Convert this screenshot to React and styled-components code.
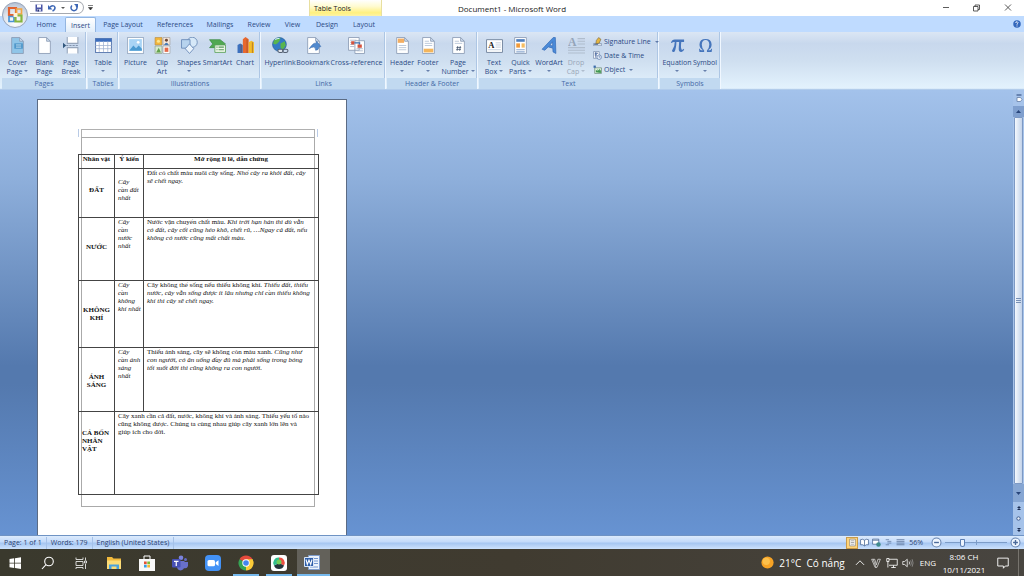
import React from 'react'
import styled, { createGlobalStyle } from 'styled-components'

const GlobalStyle = createGlobalStyle`
  * {
    box-sizing: border-box;
  }

  body {
    margin: 0;
    overflow: hidden;
    font-family: 'Open Sans', 'Noto Sans', sans-serif;
    font-size: 7px;
  }

  button {
    margin: 0;
    padding: 0;
    border: 0;
    background: none;
    color: inherit;
    font: inherit;
  }

  svg {
    display: block;
    flex: none;
  }
`

const Screen = styled.div`
  display: flex;
  flex-direction: column;
  height: 100vh;
`

/* Title bar */

const TitleBar = styled.header`
  position: relative;
  display: flex;
  align-items: center;
  justify-content: center;
  height: 16px;
  background: #fff;
`

const Title = styled.h1`
  margin: 0;
  font-size: 8px;
  font-weight: 400;
  color: #222;
`

const OfficeButton = styled.button`
  position: absolute;
  left: 2px;
  top: 2px;
  z-index: 2;
`

const QuickAccess = styled.div`
  position: absolute;
  left: 30px;
  top: 1px;
  display: flex;
  align-items: center;
  gap: 5px;
  height: 13px;
  width: 54px;
  padding-left: 5px;
  border: 1px solid #a5a9b0;
  border-left: 0;
  border-radius: 0 7px 7px 0;
`

const QuickMore = styled.button`
  position: absolute;
  left: 88px;
  top: 5px;
`

const ContextTab = styled.div`
  position: absolute;
  left: 309px;
  top: 0;
  width: 73px;
  height: 16px;
  padding: 4px 0 0 4px;
  border: solid #e8dfa0;
  border-width: 0 1px;
  background: linear-gradient(#fff 0, #fffbd0 40%, #fff07e 80%, #fdf3a8);
  color: #222;
  line-height: 9px;
`

const WindowButtons = styled.div`
  position: absolute;
  right: 12px;
  top: 4px;
  display: flex;
  gap: 23px;
`

/* Ribbon */

const Tabs = styled.nav`
  display: flex;
  align-items: flex-end;
  height: 16px;
  padding-left: 28px;
  background: #bfdbff;
`

const Tab = styled.button`
  width: ${(props) => props.$width}px;
  height: 15px;
  border-radius: 2px 2px 0 0;
  color: #2b4a85;
  white-space: nowrap;
  ${(props) =>
    props.$active &&
    `
    border: 1px solid #93b5e0;
    border-bottom: 0;
    background: linear-gradient(#fff, #e2eefa);
  `}
`

const Help = styled.button`
  margin: 0 3px 4px auto;
`

const Ribbon = styled.section`
  display: flex;
  height: 58px;
  padding: 0 2px;
  background: linear-gradient(#dbe6f4 0, #c8d8ed 20%, #cfdff0 50%, #e3f2fd 97%, #9ebde4 100%);
`

const Group = styled.div`
  display: flex;
  flex-direction: column;
  height: 57px;
  margin-right: 1px;
  border-right: 1px solid #f0f7ff;
  box-shadow: inset -1px 0 #adc6e4;
`

const GroupBody = styled.div`
  display: flex;
  flex: 1;
  padding: 5px 2px 0;
`

const GroupName = styled.div`
  height: 11px;
  background: #c1d9f0;
  color: #4469a6;
  line-height: 12px;
  text-align: center;
`

const BigButton = styled.button`
  display: flex;
  flex-direction: column;
  align-items: center;
  width: ${(props) => props.$width}px;
  color: ${(props) => (props.disabled ? '#9aa7b8' : '#2b4a85')};
  line-height: 9px;
  white-space: nowrap;

  svg {
    margin-bottom: 4px;
  }
`

const Arrow = styled.span`
  display: inline-block;
  width: 0;
  height: 0;
  margin: 3px 0 2px ${(props) => (props.$inline ? 2 : 0)}px;
  border: solid transparent;
  border-width: 2px 2px 0;
  border-top-color: currentColor;
  opacity: 0.65;
`

const SmallButtons = styled.div`
  display: flex;
  flex-direction: column;
  gap: 6px;
  margin-left: 5px;
  width: 63px;
`

const SmallButton = styled.button`
  display: flex;
  align-items: center;
  gap: 2px;
  height: 8px;
  color: #2b4a85;
  white-space: nowrap;
`

/* Document */

const Workspace = styled.main`
  display: flex;
  flex: 1;
  min-height: 0;
  background: linear-gradient(#a3c2eb 0, #8eafdb 20%, #5479ae 62%, #5479ae 66%, #6793d2 100%);
`

const Canvas = styled.div`
  flex: 1;
  padding: 9px 0 0 37px;
  overflow: hidden;
`

const Page = styled.article`
  width: 310px;
  height: 460px;
  padding: 29px 28px 0 40px;
  border: 1px solid #5b6b84;
  border-width: 1px 1px 0;
  background: #fff;
`

const HeaderArea = styled.div`
  height: 8px;
  padding: 0 2px;
  border: solid #b9cbe6;
  border-width: 0 1px;

  &::before {
    content: '';
    display: block;
    height: 8px;
    border: 1px solid #b0b0b0;
    border-bottom: 0;
  }
`

const TextArea = styled.div`
  position: relative;
  height: 370px;
  padding-top: 17px;

  &::before {
    content: '';
    position: absolute;
    inset: 0 3px;
    border: 1px solid #aaa;
  }
`

const Table = styled.table`
  position: relative;
  width: 241px;
  border-collapse: collapse;
  table-layout: fixed;
  color: #111;
  font-family: 'Liberation Serif', serif;
  font-size: 7px;
  line-height: 8px;
  white-space: nowrap;
`

const Row = styled.tr`
  height: ${(props) => props.$height}px;
`

const Cell = styled.td`
  padding: 0 0 0 3px;
  border: 1px solid #444;
  vertical-align: top;
`

const HeadCell = styled.th`
  padding: 0;
  border: 1px solid #444;
  vertical-align: top;
`

const NameCell = styled.th`
  padding: ${(props) => props.$top}px 0 0 ${(props) => (props.$left ? 3 : 0)}px;
  border: 1px solid #444;
  text-align: ${(props) => (props.$left ? 'left' : 'center')};
  vertical-align: top;
`

const OpinionCell = styled(Cell)`
  padding-top: ${(props) => props.$top}px;
  font-style: italic;
`

const ScrollBar = styled.div`
  display: flex;
  flex-direction: column;
  align-items: center;
  width: 11px;
  background: #a6c3ea;
`

const ScrollStep = styled.button`
  display: grid;
  place-items: center;
  width: 100%;
  height: ${(props) => props.$height}px;
  background: ${(props) => props.$fill};
  color: #28457a;
`

const Thumb = styled.div`
  display: grid;
  place-items: center;
  flex: 1;
  width: 9px;
  border: 1px solid #7d99c4;
  border-radius: 1px;
  background: linear-gradient(90deg, #f4f8fd, #c3d3ea);
`

/* Status bar */

const StatusBar = styled.footer`
  display: flex;
  align-items: center;
  height: 14px;
  padding-right: 3px;
  border-top: 1px solid #6f93c4;
  background: linear-gradient(#dcebfd 0, #c3dafa 45%, #a6c6f1 55%, #cde2fd 100%);
  color: #2b4372;
`

const StatusItem = styled.span`
  padding: 0 4px;
  border-right: 1px solid #a5c1e8;
  line-height: 12px;
`

const Views = styled.div`
  display: flex;
  align-items: center;
  margin-left: auto;
`

const ViewButton = styled.button`
  display: grid;
  place-items: center;
  width: 12px;
  height: 12px;
  ${(props) => props.$active && 'background: #ffd47a; box-shadow: inset 0 0 0 1px #c99b4a;'}
`

const Zoom = styled.div`
  display: flex;
  align-items: center;
  gap: 3px;
  margin-left: 3px;
`

const ZoomLevel = styled.button`
  margin-right: 5px;
`

const ZoomSlider = styled.input`
  appearance: none;
  width: 62px;
  height: 10px;
  margin: 0;
  background: linear-gradient(#7c9cc8, #7c9cc8) center / 100% 1px no-repeat,
    linear-gradient(#7c9cc8, #7c9cc8) center / 1px 5px no-repeat;

  &::-webkit-slider-thumb {
    appearance: none;
    width: 5px;
    height: 8px;
    border: 1px solid #5c7eb2;
    border-radius: 1px 1px 3px 3px;
    background: #edf4fd;
  }
`

/* Taskbar */

const Taskbar = styled.footer`
  display: flex;
  align-items: center;
  justify-content: space-between;
  height: 27px;
  background: linear-gradient(90deg, #3a392d, #403b30 50%, #484540);
  color: #fff;
`

const Apps = styled.div`
  display: flex;
  height: 100%;
`

const AppButton = styled.button`
  display: grid;
  place-items: center;
  width: 33px;
  height: 27px;
  padding-right: 3px;
  background-color: ${(props) => (props.$focused ? '#63615a' : 'transparent')};
  ${(props) =>
    props.$open &&
    `
    background-image: linear-gradient(#76b9ed, #76b9ed);
    background-position: 2px bottom;
    background-repeat: no-repeat;
    background-size: 26px 2px;
  `}
  ${(props) => props.$focused && 'background-position: 0 bottom; background-size: 100% 2px;'}
`

const Tray = styled.div`
  display: flex;
  align-items: center;
  height: 100%;
  padding-right: 5px;
  font-size: 8px;
`

const Weather = styled.button`
  display: flex;
  align-items: center;
  gap: 5px;
  margin-right: 7px;
  font-size: 10px;
`

const TrayButton = styled.button`
  display: grid;
  place-items: center;
  width: 16px;
  height: 27px;
`

const Language = styled.button`
  margin-left: 4px;
`

const Clock = styled.time`
  width: 46px;
  margin-left: 5px;
  line-height: 13px;
  text-align: center;
`

const Notifications = styled.button`
  display: grid;
  place-items: center;
  width: 32px;
  height: 27px;
  border-right: 1px solid #77746e;
`

/* Drawings */

const Icon = ({ size = 17, box = 16, children }) => (
  <svg width={size} height={size} viewBox={`0 0 ${box} ${box}`} fill="none" aria-hidden="true">
    {children}
  </svg>
)

const Sheet = ({ fill = '#fff' }) => (
  <path d="M2.500.5h7.500l3.500 3.500v11.500h-11z M10 .5V4h3.500" fill={fill} stroke="#8b9cb5" strokeWidth=".8" />
)

const icons = {
  cover: (
    <>
      <Sheet fill="#90c5e8" />
      <path d="M5 6h8v5H5z" fill="#4b94c8" />
      <path d="M6.500 7.500h5M6.500 9.500h5" stroke="#d4ebf8" strokeWidth=".8" />
    </>
  ),
  blank: <Sheet />,
  pageBreak: (
    <>
      <path d="M4 0v6h10V0M4 15.500V10h10v5.500" fill="#fff" stroke="#96a5ba" />
      <path d="M3 8h12" stroke="#8494ad" strokeDasharray="2 1" />
      <path d="M0 5.500 3 8l-3 2.500z" fill="#31577d" />
    </>
  ),
  table: (
    <>
      <path d="M.5 1.500h15v13H.5z" fill="#fff" stroke="#6381b4" />
      <path d="M.5 1.500h15v3H.5z" fill="#3b6dbd" />
      <path d="M.5 8h15M.5 11h15M4 4v10M8 4v10M12 4v10" stroke="#9eb1d0" strokeWidth=".7" />
    </>
  ),
  picture: (
    <>
      <path d="M.5.5h15v15H.5z" fill="#fff" stroke="#a3b4ca" />
      <path d="M2 2h12v11H2z" fill="#a9d4f5" />
      <path d="m2 13 4-5 2.500 2.500L11 8l3 3v2z" fill="#4c9bd1" />
      <circle cx="10.500" cy="5" r="1.300" fill="#fff" />
    </>
  ),
  clipArt: (
    <>
      <path d="M1 .5h6.500v7H1z" fill="#f2b63c" stroke="#b78a45" strokeWidth=".6" />
      <path d="M8.500.5H15v7H8.500z" fill="#f5e6da" stroke="#a09a95" strokeWidth=".6" />
      <path d="M1 8.500h6.500v7H1z" fill="#d7ead0" stroke="#8a9a89" strokeWidth=".6" />
      <path d="M8.500 8.500H15v7H8.500z" fill="#fff" stroke="#9a9a9a" strokeWidth=".6" />
      <circle cx="4.200" cy="4" r="1.500" fill="#fce48e" />
      <circle cx="11.700" cy="3" r="1.400" fill="#6a4737" />
      <path d="M9.500 7.500q2.200-4 4.400 0z" fill="#467bb5" />
      <path d="M2 14.500 4.500 10 6.500 14.500z" fill="#63a24d" />
      <path d="M10 10h3.500v4H10z" fill="#e36a4a" />
    </>
  ),
  shapes: (
    <>
      <circle cx="10.500" cy="5" r="4.800" fill="#d6e8f8" stroke="#6989b5" strokeWidth=".8" />
      <path d="M.5 2.500h8v8h-8z" fill="#b7d3ee" stroke="#6587b6" strokeWidth=".8" />
      <path d="m8 6.500 4 4.500-4 4.500L4 11z" fill="#eaf3fc" stroke="#6587b6" strokeWidth=".8" />
    </>
  ),
  smartArt: (
    <>
      <path d="M.5 2.500h10l5 4-5 3.500h-10l3-3.500z" fill="#50a851" stroke="#34843b" strokeWidth=".6" />
      <path d="M5.500 7.500h10v7h-10z" fill="#edf7e8" stroke="#5aa058" strokeWidth=".8" />
      <path d="M7 9.500h1M9 9.500h5M7 12h1M9 12h5" stroke="#57985b" />
    </>
  ),
  chart: (
    <>
      <path d="M.5 7.500 3 6l2.500 1.500v7.500h-5z" fill="#3c70bd" />
      <path d="m5.500 2 2.500-2 3 2v13H5.500z" fill="#e8682e" />
      <path d="m11 5 2.500-1.500L16 5v10h-5z" fill="#f3bd2a" />
      <path d="M4 7v8M9.500 2v13M14.500 5v10" stroke="#8b4520" strokeOpacity=".5" />
    </>
  ),
  hyperlink: (
    <>
      <circle cx="7" cy="7" r="6.500" fill="#347bc5" stroke="#235892" strokeWidth=".6" />
      <path d="M2 3q3-3 6-2L7 4 5 6 3 7 1 6zM8 6l4-2 1 4-3 4-2-2z" fill="#59b54d" />
      <path d="M3 2.500Q5 1 7 1.500" stroke="#cfeaff" />
      <rect x="5.500" y="11.500" width="5" height="3" rx="1.500" fill="#dde4ec" stroke="#566273" />
      <rect x="10" y="11.500" width="5" height="3" rx="1.500" stroke="#566273" />
    </>
  ),
  bookmark: (
    <>
      <Sheet />
      <path d="M4 11q4-6 6-5l1-2 4 5-2 .5q0 3-3 3 0-3-2-3-2 0-4 1.500" fill="#5189cd" stroke="#3567aa" strokeWidth=".5" />
    </>
  ),
  crossRef: (
    <>
      <path d="M.5.5h10v12H.5zM6.500 3.500h9v12h-9z" fill="#fff" stroke="#8a9bb3" strokeWidth=".8" />
      <path d="M2 3h6M2 5h4M2 7h4M2 9h4M8 11h6M8 13h6" stroke="#a6b5ca" strokeWidth=".8" />
      <path d="M3 4h3v3H3zM9 7h4v3H9z" fill="#d6523d" />
      <path d="M6 5.500h5V7" stroke="#376dae" />
    </>
  ),
  header: (
    <>
      <Sheet />
      <path d="M3.500 1.500h6v4h-6z" fill="#f3ae62" />
      <path d="M4.500 8h7M4.500 10h7M4.500 12h7" stroke="#b4c2d4" strokeWidth=".8" />
    </>
  ),
  footer: (
    <>
      <Sheet />
      <path d="M3.500 11h9v3.500h-9z" fill="#f3b55c" />
      <path d="M4.500 4h4M4.500 6h7M4.500 8h7" stroke="#b4c2d4" strokeWidth=".8" />
    </>
  ),
  pageNumber: (
    <>
      <Sheet />
      <path d="M4.500 4h4M4.500 6h7" stroke="#b4c2d4" strokeWidth=".8" />
      <path d="M7.300 8.500 6.700 13M9.700 8.500 9.100 13M6 9.900h4.500M5.800 11.700h4.500" stroke="#41536e" strokeWidth=".7" />
    </>
  ),
  textBox: (
    <>
      <path d="M.5 2.500h15v12H.5z" fill="#fff" stroke="#75869f" strokeWidth=".9" />
      <text x="2" y="10" fontSize="8" fontWeight="700" fontFamily="Liberation Serif, serif" fill="#222">A</text>
      <path d="M9 5.500h5M9 7.500h5M9 9.500h5M2 12h12" stroke="#b4c2d4" strokeWidth=".7" />
    </>
  ),
  quickParts: (
    <>
      <path d="M2.500.5h11v15h-11z" fill="#fff" stroke="#8b9cb5" strokeWidth=".8" />
      <path d="M4 2h8v2.500H4z" fill="#4f7fbe" />
      <path d="M4 6h3.500v4H4z" fill="#f19a38" />
      <path d="M9 6h3v4H9z" fill="#f6bd62" />
      <path d="M4 12h8M4 14h8" stroke="#8aa8d0" />
    </>
  ),
  wordArt: (
    <path
      d="M1 11.500 11.500.500h2l.5 15-2.700-1.500-.2-3.500-4.300-1.200L3.500 12.500zM8.300 7.700l2.700.8-.100-4z"
      fill="#4a8ad8"
      stroke="#2d65b2"
      strokeWidth=".6"
      fillRule="evenodd"
    />
  ),
  dropCap: (
    <>
      <text x="0" y="8.500" fontSize="11" fontWeight="700" fontFamily="Liberation Serif, serif" fill="#94a4b9">A</text>
      <path d="M9 1.500h7M9 4h7M9 6.500h7M0 10h16M0 12.500h16M0 15h16" stroke="#b0bdcd" />
    </>
  ),
  pi: (
    <g transform="translate(1 1) scale(.88)">
      <path
        d="M1 5q1-3.500 4-3.500h10v2.700h-3q-.8 6 .3 8 1 1 2.200-.7l.6.500q-1 3.200-3.200 3-3-.3-2.600-4.500l.4-6.300H6.800Q6.600 11 5 14q-1 1.500-2.400.7-1.200-1 .2-2.700Q5 9 5 4.200 2.700 4 1.800 5.300z"
        fill="#4575bc"
      />
    </g>
  ),
  omega: (
    <g transform="translate(1 1) scale(.88)">
      <path
        d="M1 11.500h.8q.3 1.500 1.500 1.500h1.900Q1.500 10.500 1.500 6.800 1.800 1 8 1t6.500 5.800q0 3.700-3.700 6.200h1.900q1.200 0 1.500-1.500h.8L14.500 15H9.500v-1.600q2.500-2.400 2.500-6.500Q11.800 2 8 2T4 6.900q0 4.100 2.500 6.500V15h-5z"
        fill="#4575bc"
      />
    </g>
  ),
  signature: (
    <>
      <path d="M1 11.500h14v4H1z" fill="#dfe6ef" stroke="#6a7f9e" />
      <path d="m5 12 1-6 4-5 4 3-3 7z" fill="#e5b640" stroke="#725d35" />
      <path d="M2 13h7" stroke="#34588d" strokeWidth="1.500" />
    </>
  ),
  dateTime: (
    <>
      <path d="M1 1h10v12H1z" fill="#fff" stroke="#59719a" />
      <path d="M3 4h6M3 7h4M5 2v10" stroke="#3d5e99" strokeWidth="1.500" />
      <circle cx="11" cy="11" r="4" fill="#e6effa" stroke="#3d5e99" />
      <path d="M11 8.500V11h2" stroke="#3d5e99" />
    </>
  ),
  object: (
    <>
      <path d="M3 5h12v10H3z" fill="#e6f3df" stroke="#476e58" />
      <path d="M5 13V8l3 3V7l3 3V6l3 4v4z" fill="#3f9651" />
      <path d="M1 1h4v4H1z" fill="#3a6bab" />
    </>
  ),
}

const ribbonGroups = [
  {
    name: 'Pages',
    buttons: [
      { icon: 'cover', width: 27, lines: ['Cover', 'Page'], menu: true },
      { icon: 'blank', width: 27, lines: ['Blank', 'Page'] },
      { icon: 'pageBreak', width: 26, lines: ['Page', 'Break'] },
    ],
  },
  { name: 'Tables', buttons: [{ icon: 'table', width: 26, lines: ['Table'], menu: true }] },
  {
    name: 'Illustrations',
    buttons: [
      { icon: 'picture', width: 27, lines: ['Picture'] },
      { icon: 'clipArt', width: 26, lines: ['Clip', 'Art'] },
      { icon: 'shapes', width: 28, lines: ['Shapes'], menu: true },
      { icon: 'smartArt', width: 29, lines: ['SmartArt'] },
      { icon: 'chart', width: 26, lines: ['Chart'] },
    ],
  },
  {
    name: 'Links',
    buttons: [
      { icon: 'hyperlink', width: 32, lines: ['Hyperlink'] },
      { icon: 'bookmark', width: 34, lines: ['Bookmark'] },
      { icon: 'crossRef', width: 53, lines: ['Cross-reference'] },
    ],
  },
  {
    name: 'Header & Footer',
    buttons: [
      { icon: 'header', width: 26, lines: ['Header'], menu: true },
      { icon: 'footer', width: 26, lines: ['Footer'], menu: true },
      { icon: 'pageNumber', width: 34, lines: ['Page', 'Number'], menu: true },
    ],
  },
  {
    name: 'Text',
    buttons: [
      { icon: 'textBox', width: 26, lines: ['Text', 'Box'], menu: true },
      { icon: 'quickParts', width: 27, lines: ['Quick', 'Parts'], menu: true },
      { icon: 'wordArt', width: 30, lines: ['WordArt'], menu: true },
      { icon: 'dropCap', width: 24, lines: ['Drop', 'Cap'], menu: true, disabled: true },
    ],
    small: [
      { icon: 'signature', label: 'Signature Line', menu: true },
      { icon: 'dateTime', label: 'Date & Time' },
      { icon: 'object', label: 'Object', menu: true },
    ],
  },
  {
    name: 'Symbols',
    buttons: [
      { icon: 'pi', width: 30, lines: ['Equation'], menu: true },
      { icon: 'omega', width: 26, lines: ['Symbol'], menu: true },
    ],
  },
]

const tabs = [
  ['Home', 37],
  ['Insert', 31],
  ['Page Layout', 54],
  ['References', 50],
  ['Mailings', 40],
  ['Review', 38],
  ['View', 29],
  ['Design', 40],
  ['Layout', 34],
]

const rows = [
  {
    name: ['ĐẤT'],
    top: 17,
    opinion: ['Cây', 'cần đất', 'nhất'],
    opinionTop: 9,
    height: 49,
    text: 'Đất có chất màu nuôi cây sống. ',
    quote: ['Nhổ cây ra khỏi đất, cây', 'sẽ chết ngay.'],
  },
  {
    name: ['NƯỚC'],
    top: 25,
    opinion: ['Cây', 'cần', 'nước', 'nhất'],
    height: 63,
    text: 'Nước vận chuyển chất màu. ',
    quote: ['Khi trời hạn hán thì dù vẫn', 'có đất, cây cối cũng héo khô, chết rũ, …Ngay cả đất, nếu', 'không có nước cũng mất chất màu.'],
  },
  {
    name: ['KHÔNG', 'KHÍ'],
    top: 25,
    opinion: ['Cây', 'cần', 'không', 'khí nhất'],
    height: 67,
    text: 'Cây không thể sống nếu thiếu không khí. ',
    quote: ['Thiếu đất, thiếu', 'nước, cây vẫn sống được ít lâu nhưng chỉ cần thiếu không', 'khí thì cây sẽ chết ngay.'],
  },
  {
    name: ['ÁNH', 'SÁNG'],
    top: 25,
    opinion: ['Cây', 'cần ánh', 'sáng', 'nhất'],
    height: 64,
    text: 'Thiếu ánh sáng, cây sẽ không còn màu xanh. ',
    quote: ['Cũng như', 'con người, có ăn uống đầy đủ mà phải sống trong bóng', 'tối suốt đời thì cũng không ra con người.'],
  },
]

const Lines = ({ of }) =>
  of.map((line, i) => (
    <React.Fragment key={line}>
      {i > 0 && <br />}
      {line}
    </React.Fragment>
  ))

const RibbonButton = ({ icon, width, lines, menu, disabled }) => (
  <BigButton $width={width} disabled={disabled}>
    <Icon>{icons[icon]}</Icon>
    <span>{lines[0]}</span>
    {lines[1] ? (
      <span>
        {lines[1]}
        {menu && <Arrow $inline />}
      </span>
    ) : (
      menu && <Arrow />
    )}
  </BigButton>
)

const DocumentTable = () => (
  <Table>
    <colgroup>
      <col style={{ width: 36 }} />
      <col style={{ width: 29 }} />
      <col />
    </colgroup>
    <thead>
      <Row $height={14}>
        <HeadCell scope="col">Nhân vật</HeadCell>
        <HeadCell scope="col">Ý kiến</HeadCell>
        <HeadCell scope="col">Mở rộng lí lẽ, dẫn chứng</HeadCell>
      </Row>
    </thead>
    <tbody>
      {rows.map((row) => (
        <Row key={row.name[0]} $height={row.height}>
          <NameCell scope="row" $top={row.top}>
            <Lines of={row.name} />
          </NameCell>
          <OpinionCell $top={row.opinionTop || 0}>
            <Lines of={row.opinion} />
          </OpinionCell>
          <Cell>
            {row.text}
            <em>
              <Lines of={row.quote} />
            </em>
          </Cell>
        </Row>
      ))}
      <Row $height={83}>
        <NameCell scope="row" $top={17} $left>
          <Lines of={['CẢ BỐN', 'NHÂN', 'VẬT']} />
        </NameCell>
        <Cell colSpan={2}>
          <Lines
            of={[
              'Cây xanh cần cả đất, nước, không khí và ánh sáng. Thiếu yếu tố nào',
              'cũng không được. Chúng ta cùng nhau giúp cây xanh lớn lên và',
              'giúp ích cho đời.',
            ]}
          />
        </Cell>
      </Row>
    </tbody>
  </Table>
)

const taskbarApps = [
  {
    name: 'Start',
    icon: <path d="m2.500 4 4.700-.7v4.400H2.500zM8 3.200 14 2.300v5.400H8zM2.500 8.500h4.700v4.400l-4.700-.7zM8 8.500h6v5.400L8 13z" fill="#fff" />,
  },
  {
    name: 'Search',
    icon: (
      <>
        <circle cx="9" cy="6.500" r="4.300" stroke="#fff" strokeWidth="1.100" />
        <path d="m6 9.600-4 4.400" stroke="#fff" strokeWidth="1.100" />
      </>
    ),
  },
  {
    name: 'Task view',
    icon: (
      <path d="M3 2.500v2h7v-2M3 6.500h7v4H3zM3 14v-1.500h7V14M12.500 2.500v3M12.500 9v5M11.500 6h2v2h-2z" stroke="#e6e6e6" strokeWidth=".9" />
    ),
  },
  {
    name: 'File Explorer',
    icon: (
      <>
        <path d="M1 2h5l1.500 1.500H15V14H1z" fill="#f2ba3c" />
        <path d="M1 5.500h14V14H1z" fill="#fcdc77" />
        <path d="M3 14V9.500h10V14h-2.500v-2.500h-5V14z" fill="#4ba2dd" />
      </>
    ),
  },
  {
    name: 'Microsoft Store',
    icon: (
      <>
        <path d="M5 4.500V1h6v3.500" stroke="#fff" />
        <path d="M0 4h16v12H0z" fill="#f8f8f8" />
        <path d="M5 6.500h2.700v2.700H5z" fill="#e65132" />
        <path d="M8.300 6.500H11v2.700H8.300z" fill="#7dba36" />
        <path d="M5 9.800h2.700v2.700H5z" fill="#359fe6" />
        <path d="M8.300 9.800H11v2.700H8.300z" fill="#f6b831" />
      </>
    ),
  },
  {
    name: 'Teams',
    icon: (
      <>
        <circle cx="13.500" cy="4.500" r="1.500" fill="#6269c4" />
        <circle cx="9" cy="2.700" r="2.300" fill="#7b83dd" />
        <path d="M11 7h5v4q-1 3-4 2zM5 6h7.500v5.500q-.5 3.500-4 4-3.500-.5-3.500-4z" fill="#6870ca" />
        <rect y="4" width="8.500" height="8.500" rx="1" fill="#4750b5" />
        <path d="M2 6.300h4.500M4.250 6.300V11" stroke="#fff" strokeWidth="1.200" />
      </>
    ),
  },
  {
    name: 'Zoom',
    icon: (
      <>
        <rect width="16" height="16" rx="4" fill="#4392f6" />
        <rect x="2.500" y="5" width="7.500" height="6.200" rx="1.500" fill="#fff" />
        <path d="m10.700 7.200 2.800-1.900v5.700l-2.800-2z" fill="#fff" />
      </>
    ),
  },
  {
    name: 'Chrome',
    open: true,
    icon: (
      <>
        <path d="M8 8 1.500 4.200A7.500 7.500 0 0 1 14.500 4.200z" fill="#e64a3c" />
        <path d="m8 8 6.500-3.800A7.500 7.500 0 0 1 8 15.500z" fill="#fbcb38" />
        <path d="M8 8v7.500A7.500 7.500 0 0 1 1.500 4.200z" fill="#36a353" />
        <path d="M8 4.200h6.500a7.500 7.500 0 0 1 .7 4z" fill="#fbcb38" />
        <circle cx="8" cy="8" r="3.700" fill="#fff" />
        <circle cx="8" cy="8" r="2.800" fill="#4385ee" />
      </>
    ),
  },
  {
    name: 'Colors',
    open: true,
    icon: (
      <>
        <rect width="16" height="16" rx="3" fill="#fff" />
        <path d="M8 8 8 2.500A5.300 5.300 0 0 1 13 10.500z" fill="#ed5043" />
        <path d="m8 8 5 2.500A5.300 5.300 0 0 1 3 10.500z" fill="#25343a" />
        <path d="m8 8-5 2.500A5.300 5.300 0 0 1 8 2.500z" fill="#32bd8d" />
        <circle cx="8" cy="7" r="2.500" fill="#73cc57" />
      </>
    ),
  },
  {
    name: 'Word',
    open: true,
    focused: true,
    icon: (
      <>
        <path d="M4.500.5h11v14h-11z" fill="#edf4fc" stroke="#7f9dcd" />
        <path d="M10 3.500h4M10 6h4M10 8.500h4M6 12h8" stroke="#7396cf" />
        <path d="M.5 2.500h9v9h-9z" fill="#2e5ea9" stroke="#d8e5f8" />
        <path d="m2 4.500 1.300 5L5 5l1.700 4.500L8 4.500" stroke="#fff" strokeWidth="1.100" />
      </>
    ),
  },
]

const views = [
  { name: 'Print Layout', active: true, icon: <path d="M3 2h10v12H3zM5 5h6M5 8h6M5 11h6" fill="#fff" stroke="#6a6a6a" /> },
  { name: 'Full Screen Reading', icon: <path d="M8 4Q5 1 1 3v9q4-1 7 2 3-3 7-2V3q-4-2-7 1zv10" fill="#fff" stroke="#41608f" strokeWidth="1.300" /> },
  {
    name: 'Web Layout',
    icon: (
      <>
        <path d="M1 2h11v9H1zM1 4h11" fill="#fff" stroke="#41608f" strokeWidth="1.300" />
        <circle cx="11.500" cy="11.500" r="4" fill="#3f8b8d" />
      </>
    ),
  },
  { name: 'Outline', icon: <path d="M3 3h6M6 6h7M6 9h7M3 12h6" stroke="#6b83a8" strokeWidth="1.500" /> },
  { name: 'Draft', icon: <path d="M1 3h14M1 6h14M1 9h14M1 12h14" stroke="#5c7499" strokeWidth="1.400" /> },
]

const ZoomIcon = ({ plus }) => (
  <Icon size={11}>
    <circle cx="8" cy="8" r="6.500" fill="#eef5fe" stroke="#6582ae" strokeWidth="1.500" />
    <path d={plus ? 'M4.500 8h7M8 4.500v7' : 'M4.500 8h7'} stroke="#4b6a9a" strokeWidth="2" />
  </Icon>
)

export default function App() {
  return (
    <Screen>
      <GlobalStyle />
      <TitleBar>
        <OfficeButton aria-label="Office Button">
          <Icon size={26} box={26}>
            <defs>
              <radialGradient id="orb" cx=".5" cy=".8" r=".8">
                <stop stopColor="#fff" />
                <stop offset=".6" stopColor="#dde3ec" />
                <stop offset="1" stopColor="#b3bfd1" />
              </radialGradient>
            </defs>
            <circle cx="13" cy="13" r="12.500" fill="url(#orb)" stroke="#98a5ba" />
            <path d="M7 6h7v7H7z" stroke="#e2622f" strokeWidth="2.200" />
            <path d="M14.500 7h5v5h-5z" stroke="#f2a541" strokeWidth="1.700" />
            <path d="M7 14.500h5v5H7z" stroke="#4a93d4" strokeWidth="1.700" />
            <path d="M13.500 13.500h6v6h-6z" stroke="#86b63f" strokeWidth="2.200" />
            <path d="M11.500 11h4v4h-4z" fill="#fff5d8" />
          </Icon>
        </OfficeButton>
        <QuickAccess>
          <button aria-label="Save">
            <Icon size={8}>
              <path d="M1 1h14v14H1z" fill="#4a55a6" />
              <path d="M4 1h8v6H4z" fill="#fff" />
              <path d="M4 10h8v5H4z" fill="#c6cde8" />
              <path d="M5 11h3v4H5z" fill="#28356f" />
            </Icon>
          </button>
          <button aria-label="Undo">
            <Icon size={8}>
              <path d="M4 6q8-5 10 1 0 5-5 7" stroke="#3c66b5" strokeWidth="3" />
              <path d="M0 2v9h9z" fill="#3c66b5" />
            </Icon>
          </button>
          <Arrow />
          <button aria-label="Repeat">
            <Icon size={8}>
              <path d="M4 3a6 6 0 1 0 8 0" stroke="#3c66b5" strokeWidth="3" />
              <path d="M8 0h8v8z" fill="#3c66b5" />
            </Icon>
          </button>
        </QuickAccess>
        <QuickMore aria-label="Customize Quick Access Toolbar">
          <Icon size={5} box={5}>
            <path d="M0 .5h5M.500 2.500h4L2.500 5z" stroke="#333" strokeWidth=".6" fill="#333" />
          </Icon>
        </QuickMore>
        <ContextTab>Table Tools</ContextTab>
        <Title>Document1 - Microsoft Word</Title>
        <WindowButtons>
          <button aria-label="Minimize">
            <Icon size={8} box={8}>
              <path d="M1 3.500h6" stroke="#333" strokeWidth=".8" />
            </Icon>
          </button>
          <button aria-label="Restore">
            <Icon size={8} box={8}>
              <path d="M.5 2.500h4.500v4.500H.5zM2 2.500V1h4.500v4.500H5" stroke="#333" strokeWidth=".8" />
            </Icon>
          </button>
          <button aria-label="Close">
            <Icon size={8} box={8}>
              <path d="m1 .500 6 6M7 .500l-6 6" stroke="#333" strokeWidth=".8" />
            </Icon>
          </button>
        </WindowButtons>
      </TitleBar>

      <Tabs>
        {tabs.map(([name, width]) => (
          <Tab key={name} $width={width} $active={name === 'Insert'}>
            {name}
          </Tab>
        ))}
        <Help aria-label="Help">
          <Icon size={8}>
            <circle cx="8" cy="8" r="7.500" fill="#3468bd" />
            <path d="M5.500 6q0-3 3-2.500 2.500 1 .5 3.500Q8 8 8 9.500M8 11v2" stroke="#fff" strokeWidth="1.800" />
          </Icon>
        </Help>
      </Tabs>

      <Ribbon>
        {ribbonGroups.map((group) => (
          <Group key={group.name}>
            <GroupBody>
              {group.buttons.map((button) => (
                <RibbonButton key={button.icon} {...button} />
              ))}
              {group.small && (
                <SmallButtons>
                  {group.small.map((item) => (
                    <SmallButton key={item.label}>
                      <Icon size={9}>{icons[item.icon]}</Icon>
                      {item.label}
                      {item.menu && <Arrow $inline />}
                    </SmallButton>
                  ))}
                </SmallButtons>
              )}
            </GroupBody>
            <GroupName>{group.name}</GroupName>
          </Group>
        ))}
      </Ribbon>

      <Workspace>
        <Canvas>
          <Page>
            <HeaderArea />
            <TextArea>
              <DocumentTable />
            </TextArea>
          </Page>
        </Canvas>
        <ScrollBar>
          <ScrollStep $height={16} aria-label="View Ruler">
            <Icon size={8} box={8}>
              <path d="M1.500 1h5" stroke="#28457a" />
              <path d="M2 3.500h3.500l1.500 2-1.500 2H2z" fill="#fff" stroke="#647da5" strokeWidth=".8" />
            </Icon>
          </ScrollStep>
          <ScrollStep $height={11} $fill="#7f9fce" aria-label="Scroll up">
            <Icon size={5} box={5}>
              <path d="M0 4 2.500 1 5 4z" fill="#28457a" />
            </Icon>
          </ScrollStep>
          <Thumb>
            <Icon size={5} box={5}>
              <path d="M0 .5h5M0 2.500h5M0 4.500h5" stroke="#7890b5" />
            </Icon>
          </Thumb>
          <ScrollStep $height={18} $fill="#86a6d3" aria-label="Scroll down">
            <Icon size={5} box={5}>
              <path d="M0 1 2.500 4 5 1z" fill="#28457a" />
            </Icon>
          </ScrollStep>
          <ScrollStep $height={11} aria-label="Previous page">
            <Icon size={4} box={4}>
              <path d="m0 2 2-2 2 2zM0 4l2-2 2 2z" fill="#1c2f55" />
            </Icon>
          </ScrollStep>
          <ScrollStep $height={11} aria-label="Select browse object">
            <Icon size={5} box={5}>
              <circle cx="2.500" cy="2.500" r="1.700" fill="#e9f1fb" stroke="#28457a" strokeWidth=".8" />
            </Icon>
          </ScrollStep>
          <ScrollStep $height={11} aria-label="Next page">
            <Icon size={4} box={4}>
              <path d="m0 0 2 2 2-2zM0 2l2 2 2-2z" fill="#1c2f55" />
            </Icon>
          </ScrollStep>
        </ScrollBar>
      </Workspace>

      <StatusBar>
        <StatusItem>Page: 1 of 1</StatusItem>
        <StatusItem>Words: 179</StatusItem>
        <StatusItem>English (United States)</StatusItem>
        <Views>
          {views.map((view) => (
            <ViewButton key={view.name} $active={view.active} aria-label={view.name}>
              <Icon size={9}>{view.icon}</Icon>
            </ViewButton>
          ))}
        </Views>
        <Zoom>
          <ZoomLevel>56%</ZoomLevel>
          <button aria-label="Zoom out">
            <ZoomIcon />
          </button>
          <ZoomSlider type="range" min="10" max="190" defaultValue="56" aria-label="Zoom" />
          <button aria-label="Zoom in">
            <ZoomIcon plus />
          </button>
        </Zoom>
      </StatusBar>

      <Taskbar>
        <Apps>
          {taskbarApps.map((app) => (
            <AppButton key={app.name} aria-label={app.name} $open={app.open} $focused={app.focused}>
              <Icon size={16}>{app.icon}</Icon>
            </AppButton>
          ))}
        </Apps>
        <Tray>
          <Weather>
            <Icon size={13}>
              <circle cx="8" cy="8" r="7.500" fill="#f7a325" />
              <circle cx="6.500" cy="6.500" r="4.500" fill="#fdc04b" />
            </Icon>
            <span>21°C&nbsp; Có nắng</span>
          </Weather>
          <TrayButton aria-label="Show hidden icons">
            <Icon size={10}>
              <path d="m1.500 11 6.500-6.500 6.500 6.500" stroke="#fff" strokeWidth="1.400" />
            </Icon>
          </TrayButton>
          <TrayButton aria-label="Vietnamese keyboard">
            <Icon size={10}>
              <path d="M1 2h5l2.500 9L11 2h4L9.500 15h-3zM3.500 2l4.500 13" stroke="#eee" strokeWidth="1.100" />
            </Icon>
          </TrayButton>
          <TrayButton aria-label="Network">
            <Icon size={12}>
              <path d="M4 3h11v8H4M7 14h6M10 11v3M1 2h3v4H1zM2.500 6v8" stroke="#fff" strokeWidth="1.100" />
            </Icon>
          </TrayButton>
          <TrayButton aria-label="Volume">
            <Icon size={12}>
              <path d="M1 6h2.500L7 3v10l-3.500-3H1zM9.500 6q1 2 0 4" stroke="#fff" />
              <path d="M11.500 4.500q2 3.500 0 7M13.500 3q2.500 5 0 10" stroke="#999" />
            </Icon>
          </TrayButton>
          <Language>ENG</Language>
          <Clock>
            8:06 CH
            <br />
            10/11/2021
          </Clock>
          <Notifications aria-label="Notifications">
            <Icon size={12}>
              <path d="M1 1.500h14v10.500h-4L8.500 15v-3H1z" stroke="#fff" strokeWidth="1.200" />
            </Icon>
          </Notifications>
        </Tray>
      </Taskbar>
    </Screen>
  )
}
